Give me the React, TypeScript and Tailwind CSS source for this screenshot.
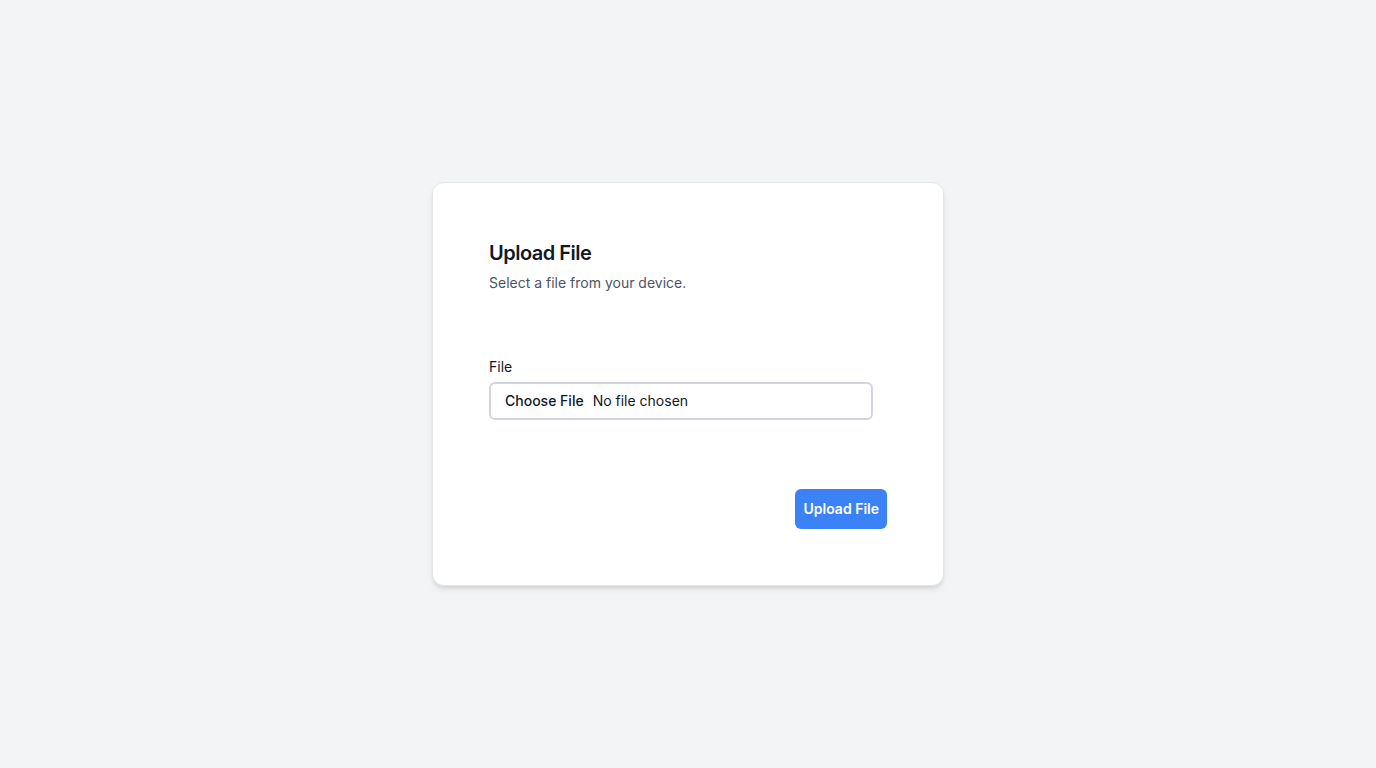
import React from "react";

export default function App() {
  return (
    <div
      className="min-h-screen w-full bg-gray-100 flex items-center justify-center"
      style={{ fontFamily: "Inter, 'Noto Sans', sans-serif" }}
    >
      <div className="w-[512px] bg-white border border-gray-200 rounded-xl shadow-md p-14">
        <h2 className="text-xl leading-7 font-semibold text-gray-900 tracking-tight">Upload File</h2>
        <p className="mt-1.5 text-sm leading-5 text-gray-600">Select a file from your device.</p>

        <div className="mt-16">
          <label className="block text-sm leading-5 text-gray-900 mb-[5px]">File</label>
          <div className="w-96 h-[38px] border-2 border-gray-300 rounded-md flex items-center pl-[14px] text-sm text-gray-900">
            <span className="font-medium">Choose File</span>
            <span className="ml-[9px]">No file chosen</span>
          </div>
        </div>

        <div className="mt-[69px] flex justify-end">
          <button className="h-10 px-2 rounded-md bg-[#3b82f6] text-white text-sm font-semibold">
            Upload File
          </button>
        </div>
      </div>
    </div>
  );
}
